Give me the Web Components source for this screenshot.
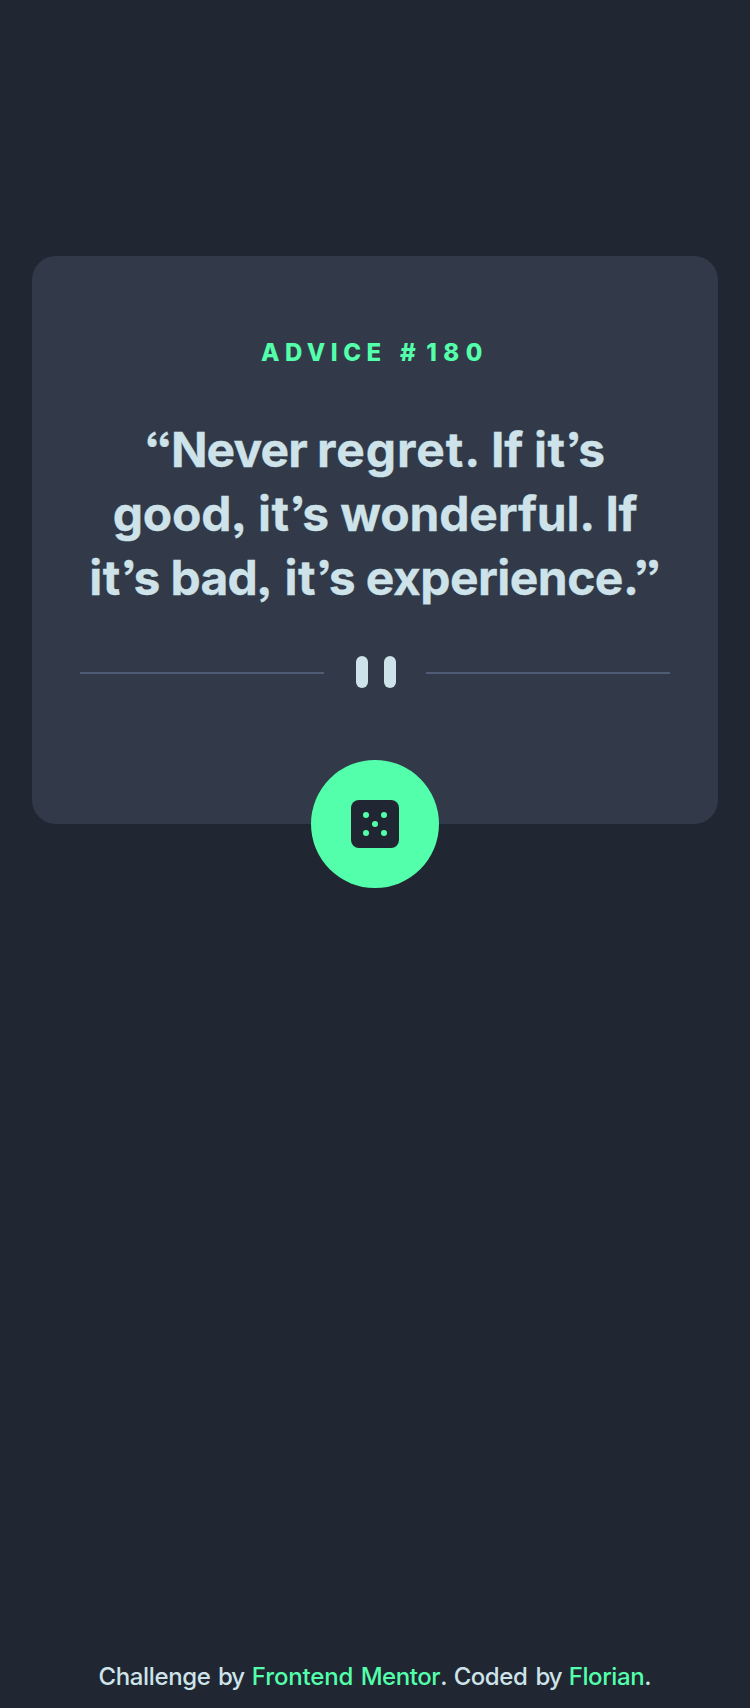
<!DOCTYPE html>
<html lang="en">
<head>
<meta charset="utf-8">
<title>Advice Generator</title>
<style>
html,body{margin:0;height:100%;background:#202632}
body{font-family:Inter,"Liberation Sans",sans-serif;color:#cee3e9}
</style>
</head>
<body>
<advice-app></advice-app>

<template id="app">
<style>
:host{display:flex;flex-direction:column;justify-content:space-between;box-sizing:border-box;height:1708px;padding:256px 32px 15px;overflow:hidden}
</style>
<advice-card></advice-card>
<page-footer></page-footer>
</template>

<template id="card">
<style>
:host{display:flex;flex-direction:column;position:relative;box-sizing:border-box;height:568px;padding:80px 48px 0;background:#323a49;border-radius:24px;text-align:center}
h1{margin:0;font-size:24px;line-height:33px;font-weight:800;color:#53ffaa}
blockquote{margin:49px -10px 0;font-size:48px;line-height:64px;font-weight:700;white-space:nowrap;font-feature-settings:"ss03";-webkit-text-stroke:.3px currentColor}
.line{display:block}
quote-divider{margin-top:46px}
dice-button{position:absolute;left:50%;bottom:-64px;margin-left:-64px}
</style>
<h1><fit-word ls="5.5">ADVICE</fit-word> <fit-word ls="10.5" ml="8.1">#</fit-word><fit-word ls="6.5">180</fit-word></h1>
<blockquote>
<span class="line"><fit-word ls="-.9">“Never</fit-word> <fit-word ls=".9" ml="-1.1">regret.</fit-word> <fit-word ls="-.3" ml="-1.6">If</fit-word> <fit-word ls=".4" ml="-.4">it’s</fit-word></span>
<span class="line"><fit-word ls="-.2">good,</fit-word> <fit-word ls=".4" ml="-.4">it’s</fit-word> <fit-word ls="-.2" ml="-.6">wonderful.</fit-word> <fit-word ls="-.3" ml="-1.2">If</fit-word></span>
<span class="line"><fit-word ls=".4">it’s</fit-word> <fit-word ls="-.9" ml="-1.6">bad,</fit-word> <fit-word ls=".4" ml="1.3">it’s</fit-word> <fit-word ls="-.55" ml="-1.6">experience.”</fit-word></span>
</blockquote>
<quote-divider></quote-divider>
<dice-button></dice-button>
</template>

<template id="divider">
<style>
:host{display:grid;grid-template-columns:244px 40px 244px;justify-content:space-between;align-items:center;height:32px}
i{height:2px;margin-top:2px;background:#4f5d74}
svg{display:block;margin-left:1px}
</style>
<i></i>
<svg width="40" height="32" viewBox="0 0 40 32" fill="#cee3e9"><rect width="12" height="32" rx="6"/><rect x="28" width="12" height="32" rx="6"/></svg>
<i></i>
</template>

<template id="dice">
<style>
:host{display:block}
button{display:grid;place-items:center;width:128px;height:128px;padding:0;border:0;border-radius:50%;background:#53ffaa;cursor:pointer}
svg{display:block}
</style>
<button aria-label="New advice"><svg width="48" height="48" viewBox="0 0 48 48"><rect width="48" height="48" rx="8" fill="#202632"/><g fill="#53ffaa"><circle cx="15" cy="15" r="3"/><circle cx="33" cy="15" r="3"/><circle cx="24" cy="24" r="3"/><circle cx="15" cy="33" r="3"/><circle cx="33" cy="33" r="3"/></g></svg></button>
</template>

<template id="footer">
<style>
:host{display:block;text-align:center;font-size:24px;line-height:33px;font-weight:500;white-space:nowrap}
a{color:#53ffaa}
</style>
<fit-word ls="-.35">Challenge</fit-word> <fit-word ls="-1" ml=".9">by</fit-word> <a><fit-word ls="-.16" ml="1.4">Frontend</fit-word> <fit-word ls="-.45" ml="1.1">Mentor</fit-word></a>. <fit-word ls="-.45" ml=".1">Coded</fit-word> <fit-word ls="-1" ml="1.7">by</fit-word> <a><fit-word ls="-.4" ml=".7">Florian</fit-word></a>.
</template>

<script>
const define = (name, id) => customElements.define(name, class extends HTMLElement {
  constructor() {
    super();
    this.attachShadow({mode: 'open'}).append(document.getElementById(id).content.cloneNode(true));
  }
});

// Inline word with its own tracking and leading offset, in pixels.
customElements.define('fit-word', class extends HTMLElement {
  connectedCallback() {
    if (this.shadowRoot) return;
    const ls = this.getAttribute('ls') || 0, ml = this.getAttribute('ml') || 0;
    this.attachShadow({mode: 'open'}).innerHTML =
      `<style>:host{display:inline;letter-spacing:${ls}px;margin-left:${ml}px}</style><slot></slot>`;
  }
});
define('quote-divider', 'divider');
define('dice-button', 'dice');
define('page-footer', 'footer');
define('advice-card', 'card');
define('advice-app', 'app');
</script>
</body>
</html>
